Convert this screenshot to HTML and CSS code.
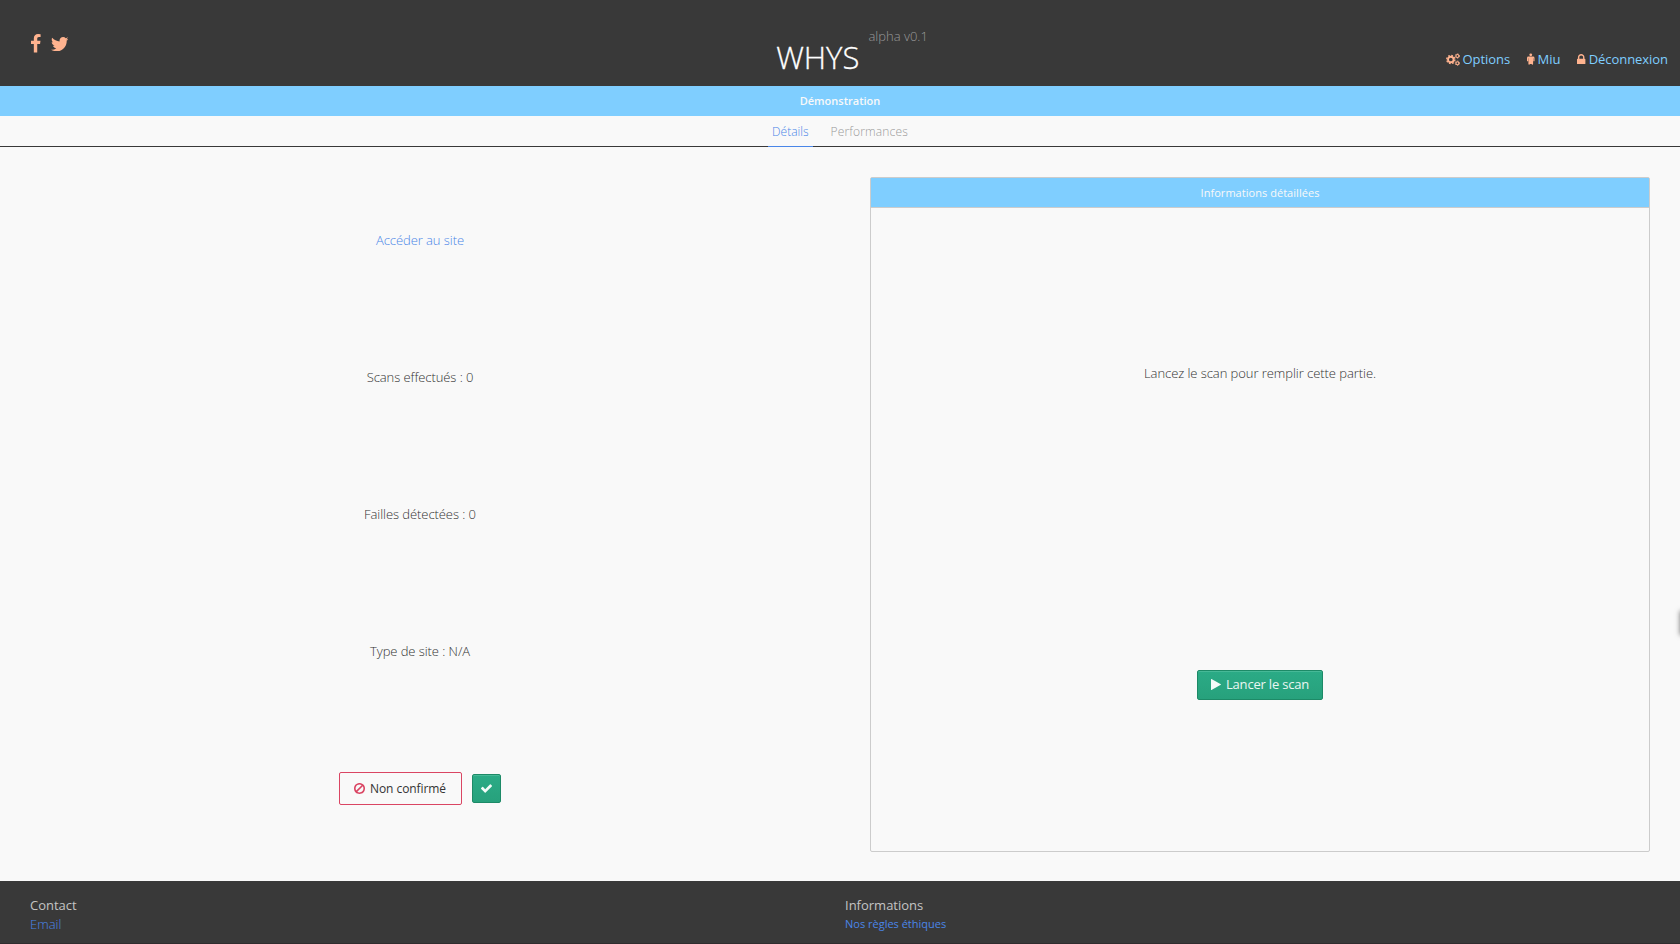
FILE: index.html
```html
<!DOCTYPE html>
<html lang="fr">
<head>
<meta charset="utf-8">
<title>WHYS</title>
<link rel="stylesheet" href="styles.css">
</head>
<body>
<header class="top">
  <div class="social">
    <svg class="fb" viewBox="479 0 864 1664"><path d="M1343 12v264h-157q-86 0-116 36t-30 108v189h293l-39 296h-254v759h-306v-759h-255v-296h255v-218q0-186 104-288.500t277-102.500q147 0 228 12z"/></svg>
    <svg class="tw" viewBox="108 256 1576 1280"><path d="M1684 408q-67 98-162 167 1 14 1 42 0 130-38 259.500t-115.500 248.500-184.500 210.500-258 146-323 54.500q-271 0-496-145 35 4 78 4 225 0 401-138-105-2-188-64.500t-114-159.500q33 5 61 5 43 0 85-11-112-23-185.500-111.500t-73.500-205.500v-4q68 38 146 41-66-44-105-115t-39-154q0-88 44-163 121 149 294.500 238.500t371.500 99.500q-8-38-8-74 0-134 94.500-228.500t228.500-94.500q140 0 236 102 109-21 205-78-37 115-142 178 93-10 186-50z"/></svg>
  </div>
  <div class="brand"><span class="name">WHYS</span><span class="version">alpha v0.1</span></div>
  <nav class="account">
    <a><svg class="cogs" viewBox="0 0 14 13"><g fill="none" stroke="#ffb38f"><circle cx="4.8" cy="6.5" r="2.8" stroke-width="1.9"/><circle cx="4.8" cy="6.5" r="4.1" stroke-width="1.3" stroke-dasharray="1.7 1.52"/><circle cx="11.4" cy="3" r="1.5" stroke-width="1.1"/><circle cx="11.4" cy="3" r="2.2" stroke-width=".8" stroke-dasharray="1.2 1.1"/><circle cx="11.4" cy="10.2" r="1.5" stroke-width="1.1"/><circle cx="11.4" cy="10.2" r="2.2" stroke-width=".8" stroke-dasharray="1.2 1.1"/></g></svg>Options</a>
    <a><svg class="male" viewBox="0 0 8 12"><circle cx="4" cy="1.5" r="1.5"/><path d="M1.5 3.3h5Q8 3.300 8 4.800v3q0 .7-.6.700t-.6-.7V5.200h-.3v6q0 .8-.75.800t-.75-.8H3q0 .8-.75.800t-.75-.8v-6h-.3v2.600q0 .7-.6.700T0 7.800v-3Q0 3.300 1.500 3.300z"/></svg>Miu</a>
    <a><svg class="lock" viewBox="320 128 1152 1408"><path d="M640 768h512v-192q0-106-75-181t-181-75-181 75-75 181v192zm832 96v576q0 40-28 68t-68 28h-960q-40 0-68-28t-28-68v-576q0-40 28-68t68-28h32v-192q0-184 132-316t316-132 316 132 132 316v192h32q40 0 68 28t28 68z"/></svg>Déconnexion</a>
  </nav>
</header>
<h1 class="band">Démonstration</h1>
<nav class="tabs"><a class="tab active">Détails</a><a class="tab perf">Performances</a></nav>
<main class="content">
  <section class="summary">
    <div class="row"><a class="link">Accéder au site</a></div>
    <div class="row">Scans effectués : 0</div>
    <div class="row">Failles détectées : 0</div>
    <div class="row">Type de site : N/A</div>
    <div class="row">
      <span class="status"><svg class="ban" viewBox="128 128 1536 1536"><path d="M1440 893q0-161-87-295l-754 753q137 89 297 89 111 0 211.500-43.500t173.500-116.500 116-174.500 43-212.500zm-999 299l755-754q-135-91-300-91-148 0-273 73t-198 199-73 274q0 162 89 299zm1223-299q0 157-61 300t-163.500 246-245 164-298.500 61-298.500-61-245-164-163.500-246-61-300 61-299.500 163.500-245.500 245-164 298.500-61 298.500 61 245 164 163.500 245.500 61 299.500z"/></svg>Non confirmé</span>
      <button class="btn confirm" aria-label="Confirmer"><svg class="check" viewBox="121 334 1550 1188"><path d="M1671 566q0 40-28 68l-724 724-136 136q-28 28-68 28t-68-28l-136-136-362-362q-28-28-28-68t28-68l136-136q28-28 68-28t68 28l294 295 656-657q28-28 68-28t68 28l136 136q28 28 28 68z"/></svg></button>
    </div>
  </section>
  <section class="panel">
    <h2 class="panel-title">Informations détaillées</h2>
    <div class="panel-body">
      <p class="hint">Lancez le scan pour remplir cette partie.</p>
      <div class="action"><button class="btn launch"><svg class="play" viewBox="0 0 10 11"><path d="M0 .3Q0-.2.500 0L9.800 5.200q.4.300 0 .6L.5 11Q0 11.200 0 10.700z"/></svg>Lancer le scan</button></div>
    </div>
  </section>
</main>
<footer class="foot">
  <div class="foot-col"><div class="foot-title">Contact</div><a class="foot-link email">Email</a></div>
  <div class="foot-col"><div class="foot-title">Informations</div><a class="foot-link rules">Nos règles éthiques</a></div>
</footer>
<div class="drawer"></div>
</body>
</html>
```
FILE: styles.css
```css
* { box-sizing: border-box; }
body {
  margin: 0;
  height: 944px;
  display: flex;
  flex-direction: column;
  overflow: hidden;
  background: #f9f9f9;
  color: #333;
  font: 300 13px/19px "Open Sans", sans-serif;
}
svg { display: block; flex: none; }
.top {
  height: 86px;
  flex: none;
  display: grid;
  grid-template-columns: 1fr auto 1fr;
  background: #393939;
}
.social { display: flex; align-items: flex-start; gap: 10px; padding: 34px 0 0 31px; fill: #ffb38f; }
.fb { width: 9.6px; height: 18.500px; }
.tw { width: 17.500px; height: 14.300px; margin-top: 2.500px; }
.brand { display: flex; align-items: flex-start; padding-left: 24px; }
.name { font-size: 31px; line-height: 42px; margin-top: 36px; color: #fff; -webkit-text-stroke: .3px #fff; }
.version { margin: 27px 0 0 9px; color: #999; }
.account {
  display: flex;
  justify-content: flex-end;
  gap: 17px;
  padding: 50px 12px 0 0;
  font-weight: 400;
  letter-spacing: -.06px;
  color: #7fceff;
}
.account a { display: flex; align-items: flex-start; gap: 3px; fill: #ffb38f; }
.cogs { width: 14px; height: 13px; margin-top: 3px; }
.male { width: 7.500px; height: 12px; margin-top: 3px; }
.lock { width: 8.400px; height: 10.300px; margin-top: 4px; }
.band {
  flex: none;
  height: 30px;
  margin: 0;
  background: #7fceff;
  color: #f9f9f9;
  font-size: 11px;
  font-weight: 600;
  line-height: 30px;
  text-align: center;
}
.tabs {
  flex: none;
  height: 31px;
  display: flex;
  justify-content: center;
  gap: 14px;
  border-bottom: 1px solid #393939;
  font-size: 12px;
  line-height: 31px;
  color: #999;
}
.tab { height: 31px; padding: 0 4px; }
.perf { letter-spacing: .15px; }
.active { color: #4a86e8; border-bottom: 1px solid #4a86e8; }
.content { flex: 1; display: grid; grid-template-columns: 840px 780px; column-gap: 30px; }
.summary { display: grid; grid-template-rows: repeat(5, 137px); padding-top: 25px; letter-spacing: -.07px; }
.row { display: flex; align-items: center; justify-content: center; gap: 10px; }
.link { color: #4a86e8; }
.status {
  display: flex;
  align-items: center;
  gap: 5px;
  width: 123px;
  height: 33px;
  padding-left: 14px;
  border: 1px solid #da4563;
  border-radius: 2px;
  color: #333;
  font-size: 12px;
  font-weight: 400;
}
.ban { width: 11px; height: 11px; fill: #da4563; }
.btn {
  display: flex;
  align-items: center;
  justify-content: center;
  height: 30px;
  padding: 0;
  border: 1px solid #1d8a67;
  border-radius: 2px;
  background: linear-gradient(#2bab86, #27a17c);
  box-shadow: inset 0 1px 0 #46b997;
  color: #e9f6f2;
  fill: #f4fbf9;
  font: 400 13px/19px "Open Sans", sans-serif;
}
.confirm { width: 29px; height: 29px; }
.check { width: 11px; height: 9px; }
.launch { width: 126px; gap: 5px; padding-bottom: 2px; letter-spacing: -.2px; }
.play { width: 10px; height: 11px; }
.panel { height: 675px; margin-top: 30px; border: 1px solid #ccc; border-radius: 2px; }
.panel-title {
  height: 30px;
  margin: 0;
  border-bottom: 1px solid #ccc;
  background: #7fceff;
  color: #f9f9f9;
  font-size: 11px;
  font-weight: 400;
  line-height: 29px;
  letter-spacing: .04px;
  text-align: center;
}
.panel-body { display: grid; grid-template-rows: 332px 290px; text-align: center; }
.hint { margin: 0; padding-bottom: 2px; align-self: center; letter-spacing: -.06px; }
.action { display: flex; align-items: center; justify-content: center; }
.foot {
  flex: none;
  height: 63px;
  display: grid;
  grid-template-columns: 815px 1fr;
  padding: 15px 0 0 30px;
  background: #393939;
  border-bottom: 1px solid #302c2e;
}
.foot-title { color: #c4c4c4; font-weight: 400; }
.foot-link { display: block; color: #4a86e8; }
.rules { font-size: 11px; font-weight: 400; line-height: 17px; }
.drawer {
  position: absolute;
  right: -30px;
  top: 611px;
  width: 30px;
  height: 24px;
  box-shadow: 0 0 5px #777;
}
```
